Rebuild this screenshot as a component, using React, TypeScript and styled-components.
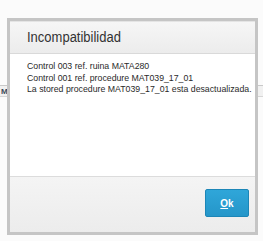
import React from "react";
import styled, { createGlobalStyle } from "styled-components";

const Global = createGlobalStyle`
  html, body { margin: 0; padding: 0; background: #fbfbfb; }
  body { font-family: "Liberation Sans", Arial, sans-serif; }
`;

const Page = styled.div`
  position: relative;
  width: 263px;
  height: 241px;
  overflow: hidden;
  background: #fbfbfb;
`;

const BackgroundGrid = styled.div`
  display: flex;
  flex-direction: column;
  padding-top: 85px;
`;

const BgRow = styled.div`
  display: flex;
  align-items: center;
  height: 10px;
  border-top: 1px solid #c9c9c9;
  border-bottom: 1px solid #d6d6d6;
  background: #f1f1f1;
  font-size: 8px;
  font-weight: bold;
  color: #3a4a5a;
  padding-left: 1px;
`;

const Dialog = styled.div`
  position: absolute;
  left: 7px;
  top: 18px;
  width: 251px;
  height: 217px;
  box-sizing: border-box;
  border: 3px solid #c5c5c5;
  background: #fff;
  display: flex;
  flex-direction: column;
`;

const Header = styled.div`
  height: 33px;
  box-sizing: border-box;
  display: flex;
  align-items: center;
  padding-left: 17px;
  background: linear-gradient(#f6f6f6, #ececec);
  border-bottom: 1px solid #d9d9d9;
  border-top: 1px solid #e4e4e4;
`;

const Title = styled.div`
  font-size: 13px;
  color: #333;
  transform: scaleY(1.08);
`;

const Body = styled.div`
  flex: 1;
  padding: 7px 2px 0 17px;
  background: #fff;
  font-size: 8.75px;
  line-height: 11.5px;
  color: #2a2a2a;
  white-space: nowrap;
`;

const Footer = styled.div`
  height: 56px;
  box-sizing: border-box;
  display: flex;
  justify-content: flex-end;
  align-items: flex-start;
  padding: 12px 6px 0 0;
  border-top: 1px solid #dcdcdc;
  background: linear-gradient(#f4f4f4, #ececec);
`;

const OkButton = styled.button`
  width: 44px;
  height: 28px;
  box-sizing: border-box;
  border: 1px solid #1c86b7;
  border-radius: 2px;
  background: linear-gradient(#2fa6d9, #2596c9);
  color: #fff;
  font-family: "Liberation Sans", Arial, sans-serif;
  font-size: 10px;
  font-weight: bold;
  padding: 0;
  u { text-decoration: underline; }
`;

export default function App() {
  return (
    <>
      <Global />
      <Page>
        <BackgroundGrid>
          <BgRow>M</BgRow>
        </BackgroundGrid>
        <Dialog>
          <Header>
            <Title>Incompatibilidad</Title>
          </Header>
          <Body>
            <div>Control 003 ref. ruina MATA280</div>
            <div>Control 001 ref. procedure MAT039_17_01</div>
            <div>La stored procedure MAT039_17_01 esta desactualizada.</div>
          </Body>
          <Footer>
            <OkButton>
              <u>O</u>k
            </OkButton>
          </Footer>
        </Dialog>
      </Page>
    </>
  );
}
